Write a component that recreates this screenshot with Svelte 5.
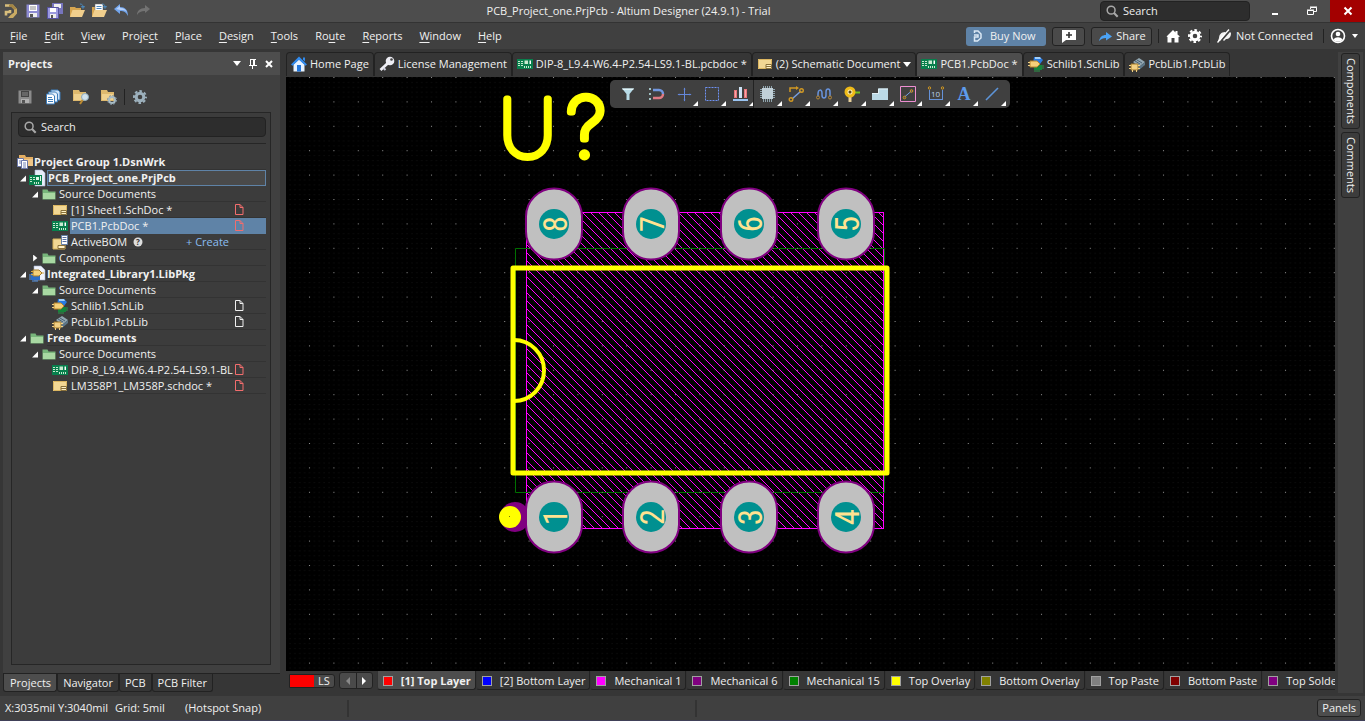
<script>
  const menus = [
    ['', 'F', 'ile'], ['', 'E', 'dit'], ['', 'V', 'iew'], ['Proje', 'c', 't'], ['', 'P', 'lace'], ['', 'D', 'esign'],
    ['', 'T', 'ools'], ['Ro', 'u', 'te'], ['', 'R', 'eports'], ['', 'W', 'indow'], ['', 'H', 'elp']
  ];

  const tree = [
    { level: 0, icon: 'group', text: 'Project Group 1.DsnWrk', bold: true },
    { level: 1, icon: 'pcbproject', text: 'PCB_Project_one.PrjPcb', bold: true, arrow: 'open', outlined: true },
    { level: 2, icon: 'folder', text: 'Source Documents', arrow: 'open' },
    { level: 3, icon: 'sch', text: '[1] Sheet1.SchDoc *', doc: 'red' },
    { level: 3, icon: 'pcb', text: 'PCB1.PcbDoc *', doc: 'red', selected: true },
    { level: 3, icon: 'bom', text: 'ActiveBOM', create: true },
    { level: 2, icon: 'folder', text: 'Components', arrow: 'closed' },
    { level: 1, icon: 'libproject', text: 'Integrated_Library1.LibPkg', bold: true, arrow: 'open' },
    { level: 2, icon: 'folder', text: 'Source Documents', arrow: 'open' },
    { level: 3, icon: 'schlib', text: 'Schlib1.SchLib', doc: 'white' },
    { level: 3, icon: 'pcblib', text: 'PcbLib1.PcbLib', doc: 'white' },
    { level: 1, icon: 'folder', text: 'Free Documents', bold: true, arrow: 'open' },
    { level: 2, icon: 'folder', text: 'Source Documents', arrow: 'open' },
    { level: 3, icon: 'pcb', text: 'DIP-8_L9.4-W6.4-P2.54-LS9.1-BL', doc: 'red' },
    { level: 3, icon: 'sch', text: 'LM358P1_LM358P.schdoc *', doc: 'red' }
  ];

  const docs = [
    { icon: 'home', text: 'Home Page' },
    { icon: 'key', text: 'License Management' },
    { icon: 'pcb', text: 'DIP-8_L9.4-W6.4-P2.54-LS9.1-BL.pcbdoc *' },
    { icon: 'sch', text: '(2) Schematic Document', menu: true },
    { icon: 'pcb', text: 'PCB1.PcbDoc *', active: true },
    { icon: 'schlib', text: 'Schlib1.SchLib' },
    { icon: 'pcblib', text: 'PcbLib1.PcbLib' }
  ];

  const tools = ['filter', 'magnet', 'cross', 'select', 'align', 'chip', 'route', 'tune', 'via', 'polygon', 'rule', 'dimension', 'string', 'line'];
  const noMenu = ['filter', 'magnet'];

  const layers = [
    ['#ff0000', '[1] Top Layer'], ['#0000ff', '[2] Bottom Layer'], ['#ff00ff', 'Mechanical 1'], ['#800080', 'Mechanical 6'],
    ['#008000', 'Mechanical 15'], ['#ffff00', 'Top Overlay'], ['#808000', 'Bottom Overlay'], ['#808080', 'Top Paste'],
    ['#800000', 'Bottom Paste'], ['#800080', 'Top Solder']
  ];

  const pads = [
    { n: 8, x: 268, y: 147 }, { n: 7, x: 365, y: 147 }, { n: 6, x: 463, y: 147 }, { n: 5, x: 560, y: 147 },
    { n: 1, x: 268, y: 440 }, { n: 2, x: 365, y: 440 }, { n: 3, x: 463, y: 440 }, { n: 4, x: 560, y: 440 }
  ];

  // Diagonal fill of the component body: each line drops 316 px over 316 px.
  const hatch = Array.from({ length: 84 }, (_, i) => `M${-72 + i * 8} 135l317 317`).join('');
</script>

{#snippet icon(name)}
  <svg class="icon" viewBox="0 0 16 16" width="16" height="16" aria-hidden="true">
    {#if name === 'logo'}
      <path d="M2 2.500h5M3 12.500V9h4v-2" fill="none" stroke="#d8be7c" stroke-width="2.600" /><path d="M6 1.500h4L14 6v4.500L10 15H5l2.500-3L11 9.500V6.500L8.500 4H6z" fill="#c9ab63" /><path d="M6 1.500h4L14 6l-3 .5-2.500-2.500H6z" fill="#a38545" />
    {:else if name === 'save' || name === 'saveGray'}
      {@const c = name === 'save' ? '#8d8bd2' : '#8b8b8b'}
      <path d="M1.500 1.500h13v13h-13z" fill={c} /><path d="M4 2h8v6H4z" fill={name === 'save' ? '#fff' : '#444'} /><path d="M5 4h6M5 6h6" stroke="#8a8a8a" /><path d="M4 10h8v4H4z" fill={name === 'save' ? '#eee' : '#b0b0b0'} /><path d="M5 11h3v3H5z" fill="#555" />
    {:else if name === 'saveAll'}
      <path d="M5 0h11v11H5z" fill="#7775bd" /><path d="M7 1h7v4H7z" fill="#eee" /><path d="M.5 4.500h11v11H.5z" fill="#9b99df" stroke="#5552a0" /><path d="M3 5h6v4H3z" fill="#fff" /><path d="M3 11h6v4H3z" fill="#eee" /><path d="M4 12h2v3H4z" fill="#555" />
    {:else if name === 'open' || name === 'openDoc'}
      <path d="M1 4h5l1 1h5v9H1z" fill="#d6a550" />
      {#if name === 'openDoc'}<path d="M4 1h8v9H4z" fill="#fff" stroke="#666" stroke-width=".5" /><path d="M5.500 3.500h5M5.500 5.500h5M5.500 7.500h5" stroke="#4d86bd" />{/if}
      <path d="M3.500 7H16l-3 7H1z" fill="#f1cf8d" /><path d="M11 1c2 0 3 1 3 3M12.500 3.500h3L14 5.500z" fill="none" stroke="#4b87b8" />
    {:else if name === 'undo'}
      <path d="M1 6l6-5v3c5 0 8 3 8 9-2-4-4-5-8-5v3z" fill="#73a5ec" /><path d="M3 6l4-3v2c4 0 6 2 7 4-2-2-4-2-7-2z" fill="#b7d1fa" />
    {:else if name === 'redo'}
      <path d="M15 6l-5-4v3C5 5 2 8 2 12c2-3 4-4 8-4v2z" fill="#737373" />
    {:else if name === 'documents'}
      <path d="M6 1h7l2 2v8H6z" fill="#cde2f7" stroke="#3c7cba" /><path d="M3.500 3h7l2 2v8h-9z" fill="#e5f0fb" stroke="#3c7cba" /><path d="M1.500 5h6l2 2v8h-8z" fill="#fff" stroke="#3c7cba" /><path d="M3 8.500h4M3 10.500h5M3 12.500h5" stroke="#3c7cba" />
    {:else if name === 'explore' || name === 'folderGear'}
      <path d="M0 1h6l1 2h6v9H0z" fill="#deb96e" /><path d="M1 5h11v6H1z" fill="#efd18f" />
      {#if name === 'explore'}<path d="M11 9l-4 6" stroke="#bd8b30" stroke-width="2" /><circle cx="12" cy="8" r="3.500" fill="#cfe1ec" stroke="#8ca9ba" />{:else}<circle cx="11" cy="11" r="3" fill="none" stroke="#a7bbc5" stroke-width="2" /><circle cx="11" cy="11" r="4.500" fill="none" stroke="#8294a0" stroke-dasharray="2 1.500" />{/if}
    {:else if name === 'gear' || name === 'gearWhite'}
      {@const c = name === 'gear' ? '#9cb0bc' : '#fff'}
      <circle cx="8" cy="8" r="3.800" fill="none" stroke={c} stroke-width="3" /><circle cx="8" cy="8" r="6" fill="none" stroke={c} stroke-width="2" stroke-dasharray="2.600 2.112" stroke-dashoffset="1.300" />
    {:else if name === 'search'}
      <circle cx="7" cy="7" r="4.500" fill="none" stroke="#a9a9a9" stroke-width="1.700" /><path d="M10 10l4.500 4.500" stroke="#a9a9a9" stroke-width="2.400" />
    {:else if name === 'folder'}
      <path d="M1.500 3.500h5l1 2h7v8h-13z" fill="#78b67b" /><path d="M2 7h12v6H2z" fill="#a8d8a2" />
    {:else if name === 'sch'}
      <path d="M1 3h14v10H1z" fill="#f2d794" /><path d="M1.500 3.500h13v9h-13z" fill="none" stroke="#dcb660" /><path d="M9 8.500h5.500v4H9z" fill="#fff1c6" stroke="#8a713a" /><path d="M9 10.500h5" stroke="#8a713a" />
    {:else if name === 'pcb'}
      <path d="M0 3h16v10H0z" fill="#087f4d" /><path d="M1 5.500h2M1 7.500h2M1 9.500h2M4 5.500h2M4 7.500h2M4 9.500h2" stroke="#c7ead0" /><path d="M7.500 10v2M9.500 10v2M11.500 10v2M13.500 10v2" stroke="#c7ead0" /><path d="M7.500 4.500H11V8H7.500z" fill="#c7ead0" /><path d="M12.500 4.500H14v3.500h-1.500z" fill="#fff" />
    {:else if name === 'pcbproject'}
      <path d="M6 0h7l3 3v13H6z" fill="#e7ecf9" stroke="#a6b2d1" stroke-width=".6" /><path d="M0 5h13v10H0z" fill="#087f4d" /><path d="M1 7.500h2M1 9.500h2M1 11.500h2M4 7.500h2M4 9.500h2" stroke="#c7ead0" /><path d="M5.500 12v2M7.500 12v2M9.500 12v2" stroke="#c7ead0" /><path d="M7 7h3v3H7zM11 6h1v5h-1z" fill="#e0f8e8" />
    {:else if name === 'bom'}
      <path d="M1 5h12v10H1z" fill="#f2d794" stroke="#d6b259" /><path d="M9.500 1.500h6v9h-6z" fill="#fff" stroke="#6480a8" /><path d="M10.500 3.500h4M10.500 5.500h4M10.500 7.500h4" stroke="#5870a0" /><path d="M6 11.500h7v3H6z" fill="#fff1c6" stroke="#8a713a" />
    {:else if name === 'group'}
      <path d="M2 1h6l1 2h7v9H2z" fill="#e3ae62" /><path d="M3 5h13v7H3z" fill="#efc687" /><path d="M.5 4.500h6v8h-6z" fill="#fff" stroke="#6c79aa" /><path d="M4.500 6.500h6v8h-6z" fill="#fff" stroke="#6c79aa" /><path d="M2 7h3M2 9h2M6 9h3M6 11h3M6 13h3" stroke="#7180b4" />
    {:else if name === 'schlib'}
      <path d="M6 1h6l3 3-3 4H5z" fill="#2a7be0" /><path d="M7 1h5l1 2H7z" fill="#a2cff8" /><path d="M6 9h8v5H6z" fill="#16843b" /><path d="M7 14v2M9 14v2M11 14v2M14 10h2M14 12h2" stroke="#2b9748" /><path d="M2 5h7l3 3-3 3H2z" fill="#f5d17a" stroke="#b9862d" /><path d="M0 6.500h2M0 9.500h2" stroke="#eed083" />
    {:else if name === 'pcblib'}
      <path d="M4 6l6-4 6 4-6 5z" fill="#93a7b2" /><path d="M6 5l5 3M8 4l5 3" stroke="#4a6071" /><path d="M5 7v3l5 4 6-5V6l-6 5z" fill="#5d7688" /><path d="M2 8h7v6H2z" fill="#f2d083" stroke="#a57c2c" /><path d="M0 9.500h2M0 12.500h2M9 9.500h2M9 12.500h2M3.500 14v2M7.500 14v2" stroke="#f2d083" />
    {:else if name === 'libproject'}
      <path d="M5 0h7l4 4v10H5z" fill="#f0f3fc" stroke="#a6b2d1" stroke-width=".6" /><path d="M2 7h9v7H2z" fill="#2b6dc7" /><path d="M0 9h2M0 11h2M0 13h2M4 14v2M6 14v2M8 14v2" stroke="#5796e8" /><path d="M4 4h6l3 3-3 3H4z" fill="#f5d17a" stroke="#a57c2c" /><path d="M2 5.500h2M2 8.500h2M13 7h2" stroke="#d6a945" />
    {:else if name === 'home'}
      <path d="M2.500 8h11v7.500h-11z" fill="#e6f2ff" /><path d="M3 8l5-4.500L13 8v2H3z" fill="#e6f2ff" /><path d="M0 8.500L8 .5l8 8-1.500 1.200L8 3.800 1.500 9.700z" fill="#318bee" /><path d="M12 1.500h2v4l-2-2z" fill="#318bee" /><path d="M6 9h4v6.500H6z" fill="#2277dd" />
    {:else if name === 'key'}
      <circle cx="11" cy="5" r="4.300" fill="#ededf4" /><circle cx="12.500" cy="3.500" r="1.300" fill="#444" /><path d="M8.500 7.500L1.500 14" stroke="#ededf4" stroke-width="2.800" /><path d="M4.500 12l2 2" stroke="#cfcfdf" stroke-width="2" />
    {:else if name === 'filter'}
      <path d="M2 2.500h12L9.500 8v6h-3V8z" fill="#b7dbe7" /><path d="M2 2.500h12l-1 1.500H3z" fill="#e0f4f8" />
    {:else if name === 'magnet'}
      <path d="M5 4h6a4 4 0 0 1 4 4" fill="none" stroke="#7297e0" stroke-width="2.500" /><path d="M15 8a4 4 0 0 1-4 4H5" fill="none" stroke="#e07a83" stroke-width="2.500" /><path d="M1 3h2M1 8h2M1 13h2" stroke="#a0bfc2" stroke-width="2" />
    {:else if name === 'cross'}
      <path d="M8.500 2v13M2 8.500h13" stroke="#6487da" /><path d="M7.500 3.500l1-2 1 2M7.500 13.500l1 2 1-2M3.500 7.500l-2 1 2 1M13.500 7.500l2 1-2 1" fill="#6487da" />
    {:else if name === 'select'}
      <path d="M1.500 1.500h13v13h-13z" fill="none" stroke="#6e92f5" stroke-dasharray="2 1" />
    {:else if name === 'align'}
      <path d="M2 4h3v8H2zM12 3h3v9h-3z" fill="#e8757b" /><path d="M3.500 5v6M13.500 4v7" stroke="#f5a5a8" /><path d="M7 1h3v11H7z" fill="#cfe2f5" /><path d="M1 14h15" stroke="#9ac4f1" stroke-width="2" />
    {:else if name === 'chip'}
      <path d="M3.500 0v16M5.500 0v16M7.500 0v16M9.500 0v16M11.500 0v16M0 3.500h15M0 5.500h15M0 7.500h15M0 9.500h15M0 11.500h15" stroke="#8fa4ae" /><path d="M2 2h11v11H2z" fill="#c1d0d8" />
    {:else if name === 'route'}
      <path d="M2 6V2h7" fill="none" stroke="#d19822" stroke-width="1.500" /><path d="M8 0l3 2-3 2" fill="#d19822" /><path d="M4 13l9-8" stroke="#769ee0" stroke-width="1.500" /><circle cx="3" cy="13.500" r="1.800" fill="none" stroke="#d19822" stroke-width="1.400" /><circle cx="13.500" cy="4.500" r="1.800" fill="none" stroke="#d19822" stroke-width="1.400" />
    {:else if name === 'tune'}
      <path d="M2 10V8c0-5 4-5 4-1v2c0 4 4 4 4 0V6c0-4 4-4 4 0v4" fill="none" stroke="#6893dc" stroke-width="1.500" /><circle cx="2" cy="11.500" r="1.500" fill="none" stroke="#b68736" /><circle cx="14" cy="11.500" r="1.500" fill="none" stroke="#b68736" />
    {:else if name === 'via'}
      <path d="M8 6.500h8" stroke="#71c020" stroke-width="2" /><path d="M6 8v8" stroke="#e7d09c" stroke-width="3" /><circle cx="6" cy="6" r="4" fill="#fff0b2" stroke="#efbb18" stroke-width="3" /><circle cx="6" cy="6" r="1.500" fill="#56451b" />
    {:else if name === 'polygon'}
      <path d="M0 7h6V2.500h10V14H0z" fill="#bad9e6" /><path d="M0 7.500h6.500V3H16" fill="none" stroke="#e0f0f6" />
    {:else if name === 'rule'}
      <path d="M.5 .5h15v15H.5z" fill="none" stroke="#ed8fd1" /><path d="M4.500 11l7-6" stroke="#769ee0" /><circle cx="4.500" cy="11.500" r="1.300" fill="none" stroke="#d19822" /><circle cx="11.500" cy="5" r="1.300" fill="none" stroke="#d19822" />
    {:else if name === 'dimension'}
      <path d="M1.500 4v10M14.500 4v10M1 13.500h14" stroke="#6592d8" fill="none" /><circle cx="1.500" cy="2" r="1.200" fill="none" stroke="#d19822" /><circle cx="14.500" cy="2" r="1.200" fill="none" stroke="#d19822" /><text x="3" y="11" font-size="8" fill="#b9cfe9">10</text>
    {:else if name === 'string'}
      <text x="8" y="14" text-anchor="middle" font-size="18" font-family="Liberation Serif, serif" font-weight="700" fill="#5d9bea">A</text>
    {:else if name === 'line'}
      <path d="M2 14L14 2" stroke="#5d94d8" stroke-width="1.600" />
    {:else if name === 'brand'}
      <path d="M5.500 5V3H9l3 3v4l-3.500 3H5.500v-4h3.500V7H5" fill="none" stroke="#dce9f5" stroke-width="1.500" />
    {:else if name === 'comment'}
      <path d="M1 2h14v10H5l-4 3z" fill="#fff" /><path d="M8 4v6M5 7h6" stroke="#333" stroke-width="1.600" />
    {:else if name === 'share'}
      <path d="M2 13c1-4 3-6 7-6V4l6 4.500-6 4V10c-3 0-5 1-7 3z" fill="#4ba3f5" />
    {:else if name === 'homeWhite'}
      <path d="M1.500 8.500L8 2l2.500 2.500V3h2v3.500l2.500 2L13.500 9v5.500h-4V10h-3v4.500h-4V9z" fill="#fff" />
    {:else if name === 'plug'}
      <path d="M2 13l1-3c0-3 2-6 6-6l1 1-6 8zM7 12l7-8 1 1c0 4-2 6-5 6l-2 2z" fill="#f2f2f2" /><path d="M1.500 14.500L13 1.500" stroke="#fff" stroke-width="1.300" />
    {:else if name === 'user'}
      <circle cx="8" cy="8" r="6.500" fill="none" stroke="#fff" stroke-width="1.600" /><circle cx="8" cy="6" r="2.300" fill="#fff" /><path d="M3.500 11.500c2-3 7-3 9 0-2 3-7 3-9 0z" fill="#fff" />
    {/if}
  </svg>
{/snippet}

<div class="app">
  <header class="titlebar">
    <div class="quick">
      {@render icon('logo')}
      {#each ['save', 'saveAll', 'open', 'openDoc', 'undo', 'redo'] as q}
        <button aria-label={q}>{@render icon(q)}</button>
      {/each}
    </div>
    <h1>PCB_Project_one.PrjPcb - Altium Designer (24.9.1) - Trial</h1>
    <label class="search top">{@render icon('search')}<input type="text" placeholder="Search" aria-label="Search" /></label>
    <div class="window">
      <button aria-label="Minimize"><svg width="12" height="12"><path d="M3 9h6" stroke="#fff" stroke-width="2" /></svg></button>
      <button aria-label="Restore"><svg width="12" height="12" fill="none" stroke="#fff"><path d="M1.500 5.500h6v4h-6zM1 5h7M4.500 4V2.500h6v4H8M4 2h7" /></svg></button>
      <button class="close" aria-label="Close"><svg width="12" height="12"><path d="M2.500 2.500l7 7M9.500 2.500l-7 7" stroke="#fff" stroke-width="2" /></svg></button>
    </div>
  </header>

  <nav class="menubar">
    <div class="menus">
      {#each menus as [a, b, c]}<button>{a}<u>{b}</u>{c}</button>{/each}
    </div>
    <div class="account">
      <button class="buy">{@render icon('brand')}Buy Now</button>
      <button class="boxed comment" aria-label="Comment">{@render icon('comment')}</button>
      <button class="boxed share">{@render icon('share')}Share</button>
      <i></i>
      <button aria-label="Home">{@render icon('homeWhite')}</button>
      <button aria-label="Preferences">{@render icon('gearWhite')}</button>
      <i></i>
      <button class="server">{@render icon('plug')}Not Connected</button>
      <i></i>
      <button class="user" aria-label="User">{@render icon('user')}<span class="down small"></span></button>
    </div>
  </nav>

  <main>
    <aside class="left">
      <section class="panel">
        <div class="panel-head">
          <h2>Projects</h2>
          <button aria-label="Panel menu"><span class="down"></span></button>
          <button aria-label="Pin"><svg width="10" height="12"><path d="M2 1.500h6M2.500 2v5M1 7.500h8M4.500 8v3" stroke="#fff" fill="none" /><path d="M5 2h2v5H5z" fill="#fff" /></svg></button>
          <button aria-label="Close panel"><svg width="10" height="10"><path d="M2 2l6 6M8 2l-6 6" stroke="#fff" stroke-width="2" /></svg></button>
        </div>
        <div class="panel-tools">
          {#each ['saveGray', 'documents', 'explore', 'folderGear'] as t}<button aria-label={t}>{@render icon(t)}</button>{/each}
          <i></i>
          <button aria-label="Settings">{@render icon('gear')}</button>
        </div>
        <div class="tree-box">
          <label class="search">{@render icon('search')}<input type="text" placeholder="Search" aria-label="Search projects" /></label>
          <ul class="tree">
            {#each tree as row}
              <li class="row l{row.level}" class:bold={row.bold}>
                {#if row.level === 1 || row.level === 2}<span class="arrow {row.arrow}"></span>{/if}
                {@render icon(row.icon)}
                <div class="label" class:selected={row.selected} class:outlined={row.outlined}>
                  <span class="name">{row.text}</span>
                  {#if row.create}
                    <svg class="help" width="10" height="10"><circle cx="5" cy="5" r="4.500" fill="#ddd" /><text x="3" y="8" font-size="8" font-weight="700" fill="#333">?</text></svg>
                    <a href="#create"><span>+</span> Create</a>
                  {/if}
                  {#if row.doc}<svg class="doc" width="9" height="11"><path d="M.5 .5h4.500l3 3v7H.5zM5 .5v3h3" fill="none" stroke={row.doc === 'red' ? '#f26d6d' : '#eee'} /></svg>{/if}
                </div>
              </li>
            {/each}
          </ul>
        </div>
      </section>
      <div class="panel-tabs">
        {#each ['Projects', 'Navigator', 'PCB', 'PCB Filter'] as t, i}<button class:active={i === 0}>{t}</button>{/each}
      </div>
    </aside>

    <section class="center">
      <div class="doc-tabs">
        {#each docs as d}
          <button class:active={d.active}>{@render icon(d.icon)}{d.text}{#if d.menu}<span class="down"></span>{/if}</button>
        {/each}
      </div>

      <div class="canvas">
        <svg class="board" width="100%" height="100%" role="img" aria-label="PCB footprint">
          <defs>
            <pattern id="minor" width="4.88" height="4.88" patternUnits="userSpaceOnUse"><rect x="3.500" width="1" height="1" fill="#121212" /></pattern>
            <pattern id="major" x="23" width="24.4" height="24.4" patternUnits="userSpaceOnUse"><rect width="1" height="1" fill="#8c8c8c" /></pattern>
            <clipPath id="body"><rect x="240" y="135" width="358" height="317" /></clipPath>
          </defs>
          <rect width="100%" height="100%" fill="url(#minor)" />
          <path d={hatch} clip-path="url(#body)" fill="none" stroke="#ff00ff" stroke-width="1" />
          <rect x="240.500" y="135.500" width="357" height="316" fill="none" stroke="#ff00ff" />
          <path d="M229.500 171.500h369v244h-369z" fill="none" stroke="#007000" />
          <rect width="100%" height="100%" fill="url(#major)" />
          <rect x="227" y="191" width="374" height="205" fill="none" stroke="#ffff00" stroke-width="5" stroke-linejoin="round" />
          <path d="M227 263h1a30 30.500 0 0 1 0 61h-1" fill="none" stroke="#ffff00" stroke-width="4" stroke-linecap="round" />
          <circle cx="229" cy="440" r="15" fill="#800080" />
          {#each pads as p}
            <rect x={p.x - 28} y={p.y - 35.5} width="56" height="71" rx="28" fill="#c0c0c0" stroke="#800080" stroke-width="2" />
            <circle cx={p.x} cy={p.y} r="15" fill="#009090" />
            <text class="pin" transform="translate({p.x + 13} {p.y}) rotate(-90)" text-anchor="middle">{p.n}</text>
          {/each}
          <circle cx="224" cy="440" r="11" fill="#ffff00" /><rect x="223" y="439" width="1" height="1" fill="#777700" />
          <text class="designator" x="212" y="80">U<tspan class="wide" x="300" text-anchor="middle">?</tspan></text>
        </svg>
        <div class="active-bar">
          {#each tools as t}
            <button class:sep={t === 'chip'} aria-label={t}>{@render icon(t)}{#if !noMenu.includes(t)}<span class="corner"></span>{/if}</button>
          {/each}
        </div>
      </div>

      <div class="layers">
        <button class="set"><span></span>LS</button>
        <div class="scroll"><button aria-label="Previous layer"><span class="prev"></span></button><button aria-label="Next layer"><span class="next"></span></button></div>
        <div class="layer-tabs">
          {#each layers as [color, name], i}<button class:active={i === 0}><span class="swatch" style:background={color}></span>{name}</button>{/each}
        </div>
      </div>
    </section>

    <aside class="right">
      <button>Components</button>
      <button>Comments</button>
    </aside>
  </main>

  <footer>
    <span class="coord">X:3035mil Y:3040mil</span><span class="grid">Grid: 5mil</span><span class="snap">(Hotspot Snap)</span>
    <i></i><i class="second"></i>
    <button>Panels</button>
  </footer>
</div>

<style>
  :global(body) { margin: 0; background: #363636; }
  .app { height: 100vh; display: flex; flex-direction: column; overflow: hidden; background: #363636; color: #f0f0f0; font: 11px/16px "Open Sans", "Noto Sans", sans-serif; }
  button { font: inherit; color: inherit; background: none; border: 0; padding: 0; display: flex; align-items: center; white-space: nowrap; }
  h1, h2 { margin: 0; font: inherit; }
  .icon, svg { display: block; flex: none; }
  .icon { overflow: visible; }
  .down { border: 4px solid transparent; border-top: 5px solid #fff; border-bottom: 0; }
  .down.small { border-width: 3px; border-top-width: 4px; border-bottom: 0; }

  .titlebar { flex: none; height: 22px; display: flex; align-items: center; background: #4d4d4d; }
  .quick { width: 154px; padding-left: 3px; display: flex; gap: 6px; }
  h1 { flex: 1; text-align: center; font-size: 11px; }
  .search { display: flex; align-items: center; height: 20px; box-sizing: border-box; gap: 4px; padding-left: 4px; background: #2d2d2d; border: 1px solid #222; border-radius: 4px; }
  .search input { flex: 1; min-width: 0; border: 0; padding: 0; background: none; color: #eee; font: inherit; outline: none; }
  .search input::placeholder { color: #eee; opacity: 1; }
  .search .icon { width: 14px; height: 14px; }
  .search.top { width: 150px; }
  .window { display: flex; height: 22px; margin-left: 6px; }
  .window button { width: 37px; justify-content: center; }
  .window .close { width: 35px; background: #a30000; }

  .menubar { flex: none; height: 27px; display: flex; align-items: center; justify-content: space-between; background: #404040; border-top: 1px solid #333; box-sizing: border-box; }
  .menus { display: flex; padding-left: 10px; gap: 17px; }
  u { text-underline-offset: 2px; }
  .account { display: flex; align-items: center; gap: 6px; padding-right: 7px; }
  .account i { width: 1px; height: 14px; background: #222; }
  .buy { height: 19px; width: 80px; background: #5f83a7; border-radius: 3px; gap: 5px; padding-left: 3px; box-sizing: border-box; }
  .boxed { height: 19px; border: 1px solid #222; border-radius: 3px; background: #4a4a4a; box-sizing: border-box; justify-content: center; }
  .comment { width: 33px; }
  .share { width: 61px; gap: 3px; }
  .server { gap: 4px; padding-right: 4px; }
  .user { gap: 6px; }

  main { flex: 1; min-height: 0; display: flex; padding-top: 3px; }
  .left { flex: none; width: 277px; margin: 0 6px 3px 3px; display: flex; flex-direction: column; }
  .panel { flex: 1; min-height: 0; display: flex; flex-direction: column; background: #404040; }
  .panel-head { height: 23px; display: flex; align-items: center; gap: 6px; padding: 0 6px 0 5px; background: #4d4d4d; }
  .panel-head h2 { flex: 1; font-weight: 700; }
  .panel-head button { width: 10px; justify-content: center; }
  .panel-tools { display: flex; align-items: center; height: 37px; padding: 7px 0 0 14px; box-sizing: border-box; gap: 12px; }
  .panel-tools i { width: 1px; height: 16px; background: #222; margin: 0 -5px; }
  .tree-box { flex: 1; min-height: 0; margin: 0 9px 8px 8px; border: 1px solid #262626; background: #3c3c3c; padding: 4px 4px 0 6px; }
  .tree { list-style: none; margin: 6px 0 0; padding: 10px 0 0; border-top: 1px solid #262626; }
  .row { height: 16px; display: flex; align-items: center; }
  .row.l1 { padding-left: 1px; }
  .row.l2 { padding-left: 13px; }
  .row.l3 { padding-left: 34px; }
  .row .icon { margin-right: 2px; }
  .row.l0 .icon { margin-right: 1px; margin-left: -1px; }
  .arrow { width: 7px; height: 7px; margin-right: 3px; flex: none; }
  .arrow.open { background: #fff; clip-path: polygon(100% 15%, 100% 100%, 15% 100%); }
  .arrow.closed { background: #fff; clip-path: polygon(30% 0, 90% 50%, 30% 100%); }
  .label { flex: 1; min-width: 0; display: flex; align-items: center; height: 16px; box-sizing: border-box; border-bottom: 1px solid #333; white-space: nowrap; }
  .bold { font-weight: 700; }
  .selected { background: #5f83a7; border-color: #5f83a7; }
  .outlined { border: 1px solid #5f83a7; background: #4a4a4a; }
  .label .doc { margin-left: auto; margin-right: 22px; }
  .l3 .label .name { padding-left: 1px; }
  .help { margin-left: 6px; }
  .label a { margin-left: auto; margin-right: 37px; color: #8abcf0; text-decoration: none; }

  .panel-tabs { flex: none; height: 20px; display: flex; border-top: 1px solid #222; box-sizing: border-box; }
  .panel-tabs button { height: 18px; padding: 0 5px; border: 1px solid #222; border-top: 0; border-radius: 0 0 3px 3px; background: #363636; box-sizing: border-box; }
  .panel-tabs .active { background: #4d4d4d; padding-left: 6px; }

  .center { flex: 1; min-width: 0; display: flex; flex-direction: column; }
  .doc-tabs { flex: none; display: flex; height: 25px; }
  .doc-tabs button { height: 24px; padding: 0 4px 1px; gap: 3px; border: 1px solid #222; border-bottom: 0; border-radius: 4px 4px 0 0; box-sizing: border-box; }
  .doc-tabs .active { background: #4d4d4d; }
  .canvas { flex: 1; min-height: 0; position: relative; background: #000; overflow: hidden; }
  .board { position: absolute; inset: 0; }
  .pin { font: 33px "Liberation Sans Narrow", "Roboto Condensed", "Open Sans Condensed", "DejaVu Sans Condensed", sans-serif; fill: #ffe291; }
  .designator { font: 100 82px Lato, Inter, sans-serif; fill: #ffff00; stroke: #ffff00; stroke-width: 7px; stroke-linejoin: round; }
  .wide { font-family: Inter, sans-serif; }
  .active-bar { position: absolute; left: 324px; top: 3px; height: 28px; display: flex; padding: 0 4px; background: #404040; border-radius: 5px; }
  .active-bar button { width: 28px; height: 28px; justify-content: center; position: relative; }
  .sep { box-shadow: -1px 0 #222; }
  .corner { position: absolute; right: 0; bottom: 2px; width: 5px; height: 5px; background: #fff; clip-path: polygon(100% 0, 100% 100%, 0 100%); }

  .layers { flex: none; height: 25px; display: flex; align-items: flex-start; }
  .set { margin: 3px 4px 0 3px; height: 14px; border: 1px solid #222; background: #4a4a4a; border-radius: 0 3px 3px 0; padding-right: 4px; gap: 4px; box-sizing: border-box; }
  .set span { width: 24px; height: 12px; background: red; }
  .scroll { display: flex; height: 17px; margin: 1px 4px 0 0; border: 1px solid #222; border-radius: 3px; background: #4a4a4a; box-sizing: border-box; }
  .scroll button { width: 16px; justify-content: center; }
  .scroll button + button { border-left: 1px solid #222; }
  .prev { border: 4px solid transparent; border-right: 4px solid #888; border-left: 0; }
  .next { border: 4px solid transparent; border-left: 4px solid #fff; border-right: 0; }
  .layer-tabs { flex: 1; min-width: 0; display: flex; overflow: hidden; }
  .layer-tabs button { flex: none; height: 19px; padding: 1px 4px 0 5px; border: 1px solid #222; border-top: 0; border-left-color: #333; border-radius: 0 0 3px 3px; gap: 8px; box-sizing: border-box; }
  .layer-tabs .active { background: #4d4d4d; font-weight: 700; }
  .swatch { width: 8px; height: 8px; border: 1px solid #a0a0a0; }

  .right { flex: none; width: 25px; margin: 0 2px 3px 3px; background: #404040; display: flex; flex-direction: column; align-items: center; gap: 3px; padding-top: 1px; box-sizing: border-box; }
  .right button { writing-mode: vertical-rl; width: 19px; padding: 4px 0; border: 1px solid #222; border-radius: 3px; background: #3c3c3c; box-sizing: border-box; justify-content: flex-start; }

  footer { flex: none; height: 25px; display: flex; align-items: center; padding: 0 4px 0 5px; background: #404040; border-bottom: 1px solid #404058; box-sizing: border-box; }
  .coord { width: 110px; }
  .grid { width: 70px; }
  .snap { width: 162px; }
  footer i { width: 2px; height: 17px; background: #333; }
  footer .second { margin-left: 346px; }
  footer button { margin-left: auto; height: 18px; padding: 0 4px; border: 1px solid #222; border-radius: 3px; background: #4d4d4d; box-sizing: border-box; }
</style>
